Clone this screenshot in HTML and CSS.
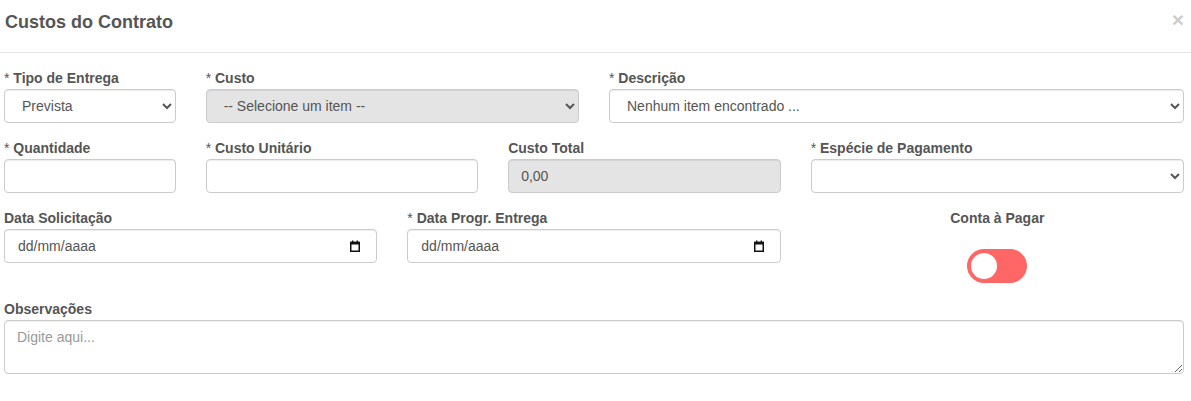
FILE: index.html
```html
<!DOCTYPE html>
<html lang="pt-BR">
<head>
<meta charset="utf-8">
<title>Custos do Contrato</title>
<link rel="stylesheet" href="styles.css">
</head>
<body>
<div class="modal">
  <div class="modal-header">
    <h4 class="modal-title">Custos do Contrato</h4>
    <button class="close" type="button">×</button>
  </div>
  <form class="modal-body">
    <div class="form-group span-2">
      <label><span class="req">* </span>Tipo de Entrega</label>
      <select class="form-control"><option>Prevista</option></select>
    </div>
    <div class="form-group span-4">
      <label><span class="req">* </span>Custo</label>
      <select class="form-control" disabled><option>-- Selecione um item --</option></select>
    </div>
    <div class="form-group span-6">
      <label><span class="req">* </span>Descrição</label>
      <select class="form-control"><option>Nenhum item encontrado ...</option></select>
    </div>

    <div class="form-group span-2">
      <label><span class="req">* </span>Quantidade</label>
      <input class="form-control" type="text">
    </div>
    <div class="form-group span-3">
      <label><span class="req">* </span>Custo Unitário</label>
      <input class="form-control" type="text">
    </div>
    <div class="form-group span-3">
      <label>Custo Total</label>
      <input class="form-control" type="text" value="0,00" disabled>
    </div>
    <div class="form-group span-4">
      <label><span class="req">* </span>Espécie de Pagamento</label>
      <select class="form-control"><option></option></select>
    </div>

    <div class="form-group span-4">
      <label>Data Solicitação</label>
      <div class="date-control">
        <span class="date-text">dd/mm/aaaa</span>
        <svg class="cal" width="10" height="12" viewBox="0 0 10 12"><rect x="0.75" y="2.5" width="8.5" height="8.75" fill="none" stroke="#111" stroke-width="1.5"/><rect x="0" y="1.8" width="10" height="2.7" fill="#111"/><rect x="2" y="0.5" width="1.4" height="2" fill="#111"/><rect x="6.6" y="0.5" width="1.4" height="2" fill="#111"/></svg>
      </div>
    </div>
    <div class="form-group span-4">
      <label><span class="req">* </span>Data Progr. Entrega</label>
      <div class="date-control">
        <span class="date-text">dd/mm/aaaa</span>
        <svg class="cal" width="10" height="12" viewBox="0 0 10 12"><rect x="0.75" y="2.5" width="8.5" height="8.75" fill="none" stroke="#111" stroke-width="1.5"/><rect x="0" y="1.8" width="10" height="2.7" fill="#111"/><rect x="2" y="0.5" width="1.4" height="2" fill="#111"/><rect x="6.6" y="0.5" width="1.4" height="2" fill="#111"/></svg>
      </div>
    </div>
    <div class="form-group span-4 center">
      <label>Conta à Pagar</label>
      <span class="toggle"><span class="knob"></span></span>
    </div>

    <div class="form-group span-12">
      <label>Observações</label>
      <textarea class="form-control" rows="2" placeholder="Digite aqui..."></textarea>
    </div>
  </form>
</div>
</body>
</html>
```
FILE: styles.css
```css
* { box-sizing: border-box; }
html, body { margin: 0; padding: 0; background: #fff; }
body {
  font-family: "Liberation Sans", Arial, Helvetica, sans-serif;
  font-size: 14px;
  color: #555;
  width: 1191px;
}
.modal-header {
  height: 53px;
  border-bottom: 1px solid #e5e5e5;
  display: flex;
  justify-content: space-between;
  align-items: flex-start;
  padding: 12px 7px 0 5px;
}
.modal-title {
  margin: 0;
  font-size: 18px;
  line-height: 20px;
  font-weight: bold;
  color: #555;
}
.close {
  border: 0;
  background: none;
  padding: 0;
  margin: 0;
  font-family: "Liberation Sans", Arial, sans-serif;
  font-size: 21px;
  line-height: 21px;
  font-weight: bold;
  color: #000;
  opacity: .2;
  margin-top: -3px;
}
.modal-body {
  display: grid;
  grid-template-columns: repeat(12, 1fr);
  column-gap: 30px;
  row-gap: 18px;
  padding: 18px 7px 20px 4px;
  margin: 0;
}
.span-2 { grid-column: span 2; }
.span-3 { grid-column: span 3; }
.span-4 { grid-column: span 4; }
.span-6 { grid-column: span 6; }
.span-12 { grid-column: span 12; }
.form-group { display: flex; flex-direction: column; min-width: 0; }
.form-group.center { align-items: center; }
label {
  display: block;
  font-size: 14px;
  line-height: 15px;
  font-weight: bold;
  color: #555;
  margin-bottom: 3px;
}
.req { font-weight: normal; }
.form-control {
  display: block;
  width: 100%;
  height: 34px;
  padding: 6px 12px;
  font-family: "Liberation Sans", Arial, Helvetica, sans-serif;
  font-size: 14px;
  line-height: 20px;
  color: #555;
  background: #fff;
  border: 1px solid #ccc;
  border-radius: 4px;
  box-shadow: inset 0 1px 1px rgba(0,0,0,.075);
  margin: 0;
}
select.form-control { padding: 6px 8px 6px 13px; }
.form-control:disabled { background: #e4e4e4; opacity: 1; color: #555; }
textarea.form-control { height: 54px; resize: vertical; }
textarea::placeholder { color: #999; }
.date-control {
  display: flex;
  align-items: center;
  justify-content: space-between;
  height: 34px;
  padding: 0 16px 0 13px;
  border: 1px solid #ccc;
  border-radius: 4px;
  box-shadow: inset 0 1px 1px rgba(0,0,0,.075);
  font-size: 14px;
  color: #555;
}
.cal { display: block; margin-top: -1px; }
.toggle {
  display: flex;
  align-items: center;
  width: 60px;
  height: 34px;
  margin-top: 20px;
  margin-bottom: 1px;
  border-radius: 17px;
  background: #ff6666;
  padding: 0 4px;
}
.knob {
  width: 26px;
  height: 26px;
  border-radius: 50%;
  background: #fff;
}
```
